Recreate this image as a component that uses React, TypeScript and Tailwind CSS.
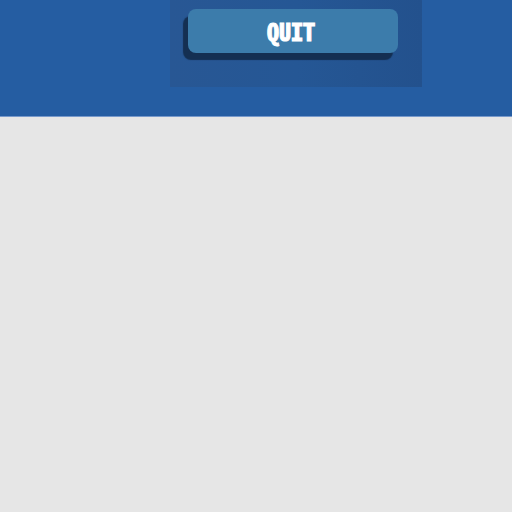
export default function App() {
  return (
    <div className="min-h-screen bg-[#e6e6e6]">
      <header className="flex justify-center border-b border-[#7799cb] bg-[#255da2] pb-[29px] pl-20">
        <nav className="w-full max-w-[252px] bg-linear-to-r from-[#285794] via-[#255795] to-[#23518d] pt-[9px] pr-6 pb-[34px] pl-[18px]">
          <button
            type="button"
            className="flex h-11 w-full items-center justify-center rounded-lg bg-[#3c7cab] pr-1 pb-px font-['Noto_Sans_Mono_CJK_SC','Noto_Sans_Mono_CJK_JP',Roboto,sans-serif] text-2xl font-bold text-white shadow-[-5px_7px_1px_#142f52] [-webkit-text-stroke:1px_white]"
          >
            QUIT
          </button>
        </nav>
      </header>
    </div>
  );
}
